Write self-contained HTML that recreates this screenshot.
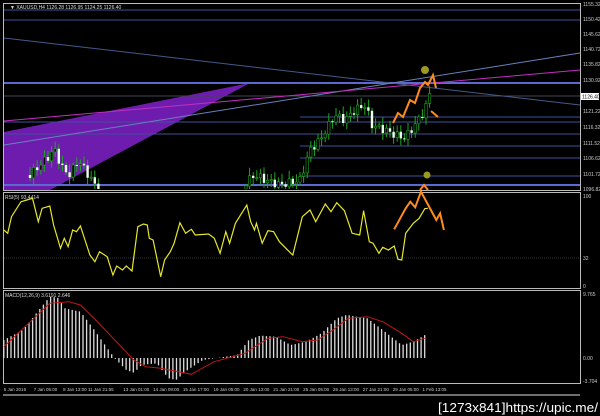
<!DOCTYPE html>
<html><head><meta charset="utf-8"><style>
html,body{margin:0;padding:0;background:#000;width:600px;height:416px;overflow:hidden}
svg{display:block}
text{font-family:"Liberation Sans",sans-serif}
</style></head><body>
<svg id="s" width="600" height="416" viewBox="0 0 600 416" xmlns="http://www.w3.org/2000/svg">
<rect width="600" height="416" fill="#000"/>
<rect x="3.5" y="3.5" width="577" height="187" fill="none" stroke="#bbb" stroke-width="1"/>
<polygon points="4,132 250,83 50,190 4,190" fill="#7a1fc0" opacity="0.9"/>
<g stroke="#3f4f9a" stroke-width="1">
<line x1="4" y1="10" x2="580" y2="10"/>
<line x1="4" y1="20" x2="580" y2="20"/>
<line x1="4" y1="96" x2="580" y2="96" stroke="#445"/>
<line x1="4" y1="122" x2="580" y2="122"/>
<line x1="4" y1="134" x2="580" y2="134"/>
<line x1="300" y1="117" x2="580" y2="117"/>
<line x1="300" y1="146" x2="580" y2="146"/>
<line x1="300" y1="158" x2="580" y2="158"/>
<line x1="300" y1="176" x2="580" y2="176"/>
</g>
<line x1="4" y1="83" x2="580" y2="83" stroke="#5a6ad0" stroke-width="2"/>
<line x1="4" y1="185" x2="580" y2="185" stroke="#5a6ad0" stroke-width="2"/>
<line x1="4" y1="38" x2="580" y2="105" stroke="#445a8a" stroke-width="1"/>
<line x1="4" y1="145" x2="580" y2="53" stroke="#6a80c0" stroke-width="1"/>
<line x1="4" y1="121" x2="580" y2="70" stroke="#c030c0" stroke-width="1"/>
<path id="wicks" fill="none" stroke="#1fa61f" stroke-width="1"/>
<path id="upb" fill="#000" stroke="#1fa61f" stroke-width="0.6"/>
<path id="dnb" fill="#e8ffe8" stroke="none"/>
<polyline points="393,123 398,113 403,117 410,100 415,103 420,88 425,82 428,85 433,75 436,88" fill="none" stroke="#ff8c1a" stroke-width="2"/>
<polyline points="431,111 438,117" fill="none" stroke="#ff8c1a" stroke-width="2"/>
<polyline points="420,190 424,185 428,190" fill="none" stroke="#ff8c1a" stroke-width="2"/>
<circle cx="425" cy="70" r="4" fill="#9a9a20"/>
<circle cx="427" cy="175" r="3.5" fill="#9a9a20"/>
<text x="10" y="9" font-size="5" fill="#ddd">▼ XAUUSD,H4 1126.28 1126.95 1124.25 1126.40</text>
<g font-size="5" fill="#ccc" id="paxis"></g>
<rect x="581" y="93" width="18" height="7" fill="#fff"/><text x="582" y="98.5" font-size="5" fill="#000">1126.40</text>
<rect x="3.5" y="192.5" width="577" height="96" fill="none" stroke="#bbb"/>
<text x="5" y="199" font-size="5" fill="#ddd">RSI(5) 93.4414</text>
<line x1="4" y1="258" x2="580" y2="258" stroke="#333" stroke-dasharray="1,1"/>
<text x="583" y="198" font-size="5" fill="#ccc">100</text>
<text x="583" y="260" font-size="5" fill="#ccc">32</text>
<text x="583" y="288" font-size="5" fill="#ccc">0</text>
<polyline id="rsi" fill="none" stroke="#e6e62a" stroke-width="1.2"/>
<polyline id="rsio" fill="none" stroke="#ff8c1a" stroke-width="2"/>
<rect x="3.5" y="290.5" width="577" height="93" fill="none" stroke="#bbb"/>
<text x="5" y="297" font-size="5" fill="#ddd">MACD(12,26,9) 3.6191 2.646</text>
<text x="583" y="296" font-size="5" fill="#ccc">9.765</text>
<text x="583" y="360" font-size="5" fill="#ccc">0.00</text>
<text x="583" y="383" font-size="5" fill="#ccc">-3.704</text>
<path id="bars" stroke="#ddd" stroke-width="1.3" fill="none"/>
<polyline id="sig" fill="none" stroke="#c01818" stroke-width="1"/>
<g font-size="4.5" fill="#ccc" id="taxis"></g>
<line x1="3" y1="395" x2="580" y2="395" stroke="#ddd" stroke-width="1"/>
<text x="598" y="412" font-size="13" fill="#fff" text-anchor="end" textLength="160" lengthAdjust="spacingAndGlyphs" font-family="Liberation Mono,monospace">[1273x841]https://upic.me/</text>
</svg>
<script>
(function(){
var NS="http://www.w3.org/2000/svg";
function el(t,a,p){var e=document.createElementNS(NS,t);for(var k in a)e.setAttribute(k,a[k]);p.appendChild(e);return e;}
var pl=[["1155.32",6],["1150.42",21],["1145.62",36],["1140.72",51],["1135.82",66],["1130.92",82],["1121.22",113],["1116.32",129],["1111.52",145],["1106.62",160],["1101.72",176],["1096.82",191]];
var pa=document.getElementById("paxis");pl.forEach(function(p){var t=el("text",{x:583,y:p[1]},pa);t.textContent=p[0];});
function interp(k,v){for(var i=0;i<k.length-1;i++){if(v>=k[i][0]&&v<=k[i+1][0]){var f=(v-k[i][0])/(k[i+1][0]-k[i][0]);return k[i][1]+f*(k[i+1][1]-k[i][1]);}}return k[k.length-1][1];}
var key=[[30,175],[45,160],[55,150],[62,168],[70,175],[78,160],[85,170],[95,185],[110,190],[243,185],[255,175],[265,180],[280,185],[300,180],[310,150],[320,140],[335,115],[345,120],[355,110],[365,105],[372,125],[385,130],[395,135],[405,138],[415,125],[425,110],[430,92]];
var prev=175,n=0,W="",U="",D="";
function cl(v){return Math.max(5,Math.min(189,v));}
for(var cx=30;cx<=430;cx+=3.6){n++;if(cx>100&&cx<243)continue;
var c=interp(key,cx)+Math.sin(n*2.3)*4;var o=prev;
var bt=cl(Math.min(o,c)),bb=cl(Math.max(o,c));if(bb-bt<1)bb=bt+1;
var wt=cl(bt-2-Math.abs(Math.sin(n*1.7))*6),wb=cl(bb+2+Math.abs(Math.cos(n*1.3))*5);
W+="M"+cx.toFixed(1)+" "+wt.toFixed(1)+"V"+wb.toFixed(1);
var rr="M"+(cx-1.2).toFixed(1)+" "+bt.toFixed(1)+"h2.4V"+bb.toFixed(1)+"h-2.4Z";
if(c<o)U+=rr;else D+=rr;prev=c;}
document.getElementById("wicks").setAttribute("d",W);
document.getElementById("upb").setAttribute("d",U);
document.getElementById("dnb").setAttribute("d",D);
var r=[[10,120],[20,130],[30,80],[55,35],[70,30],[85,25],[100,95],[110,55],[130,48],[140,105],[158,175],[168,145],[178,170],[190,120],[200,125],[210,108],[235,195],[248,215],[260,185],[280,200],[295,255],[305,228],[320,240],[330,228],[345,243],[360,110],[375,102],[385,105],[390,145],[400,150],[420,260],[430,210],[445,185],[455,160],[470,98],[485,130],[500,118],[510,135],[545,132],[560,145],[575,190],[590,125],[600,160],[615,100],[645,45],[655,95],[665,120],[670,100],[685,160],[700,122],[715,125],[730,155],[760,190],[765,195],[790,80],[810,60],[825,95],[850,42],[865,65],[880,38],[900,62],[920,130],[940,135],[950,62],[965,155],[975,160],[990,190],[1000,172],[1015,180],[1030,168],[1040,208],[1050,210],[1060,130],[1080,100],[1095,85],[1110,56],[1118,55]];
function cv(a){return a.map(function(p){return (p[0]/2.613).toFixed(1)+","+(190+p[1]/3).toFixed(1)}).join(" ");}
document.getElementById("rsi").setAttribute("points",cv(r));
document.getElementById("rsio").setAttribute("points",cv([[1030,118],[1060,55],[1072,35],[1085,52],[1100,5],[1140,90],[1150,70],[1160,120]]));
var bk=[[10,450],[60,420],[130,320],[150,322],[170,355],[210,365],[240,410],[290,490],[300,505],[330,540],[350,548],[370,525],[410,520],[440,565],[460,570],[490,540],[530,510],[560,505],[620,495],[650,450],[680,437],[720,440],[760,465],[800,455],[840,430],[880,385],[905,375],[960,385],[1000,420],[1050,465],[1080,455],[1118,430]];
var B="";
for(var zx=10;zx<=1118;zx+=9.4){var ty=interp(bk,zx);B+="M"+(zx/2.613).toFixed(1)+" 358V"+(190+ty/3).toFixed(1);}
document.getElementById("bars").setAttribute("d",B);
var sg=[[10,470],[130,340],[180,335],[210,345],[250,390],[300,450],[350,510],[380,530],[420,535],[480,548],[500,553],[520,540],[560,515],[640,490],[700,445],[740,440],[790,455],[830,450],[870,420],[910,385],[960,380],[1000,395],[1050,430],[1080,455],[1110,445]];
document.getElementById("sig").setAttribute("points",cv(sg));
var tl=[["5 Jan 2016",10],["7 Jan 05:00",88],["8 Jan 13:00",165],["11 Jan 21:55",230],["13 Jan 01:00",322],["14 Jan 09:00",400],["15 Jan 17:00",478],["19 Jan 05:00",558],["20 Jan 13:00",636],["21 Jan 21:00",714],["25 Jan 05:00",792],["26 Jan 13:00",870],["27 Jan 21:00",948],["29 Jan 05:00",1026],["1 Feb 13:05",1104]];
var ta=document.getElementById("taxis");tl.forEach(function(t){var e=el("text",{x:(t[1]/2.613).toFixed(1),y:391},ta);e.textContent=t[0];});
})();
</script>
</body></html>
